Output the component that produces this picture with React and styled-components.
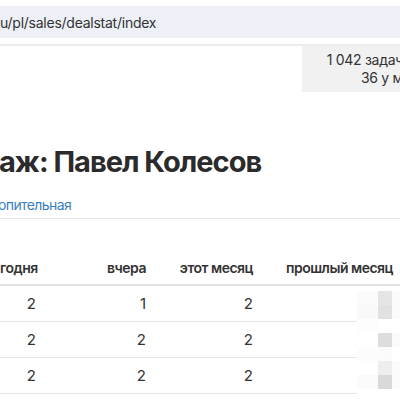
import React from "react";
import styled, { createGlobalStyle } from "styled-components";

const GlobalStyle = createGlobalStyle`
  html, body {
    margin: 0;
    padding: 0;
    background: #ffffff;
    overflow: hidden;
  }
  body {
    font-family: Inter, "Noto Sans", "Liberation Sans", sans-serif;
    color: #333333;
    width: 400px;
  }
`;

const Page = styled.div`
  width: 400px;
  padding-top: 6px;
`;

const UrlBar = styled.div`
  height: 32px;
  background: #eef0f7;
  display: flex;
  align-items: center;
  font-size: 14px;
  letter-spacing: -0.25px;
  color: #333;
  white-space: nowrap;
`;

const Divider = styled.div`
  margin-top: 6px;
  height: 2px;
  background: #ececec;
`;

const TopRow = styled.div`
  display: flex;
  justify-content: flex-end;
`;

const StatBox = styled.div`
  width: 101px;
  margin-right: -3px;
  height: 46px;
  box-sizing: border-box;
  padding-top: 5px;
  background: #f1f1f1;
  font-size: 14px;
  line-height: 18px;
  letter-spacing: -0.3px;
  text-align: right;
  white-space: nowrap;
  color: #333;
`;

const Title = styled.h1`
  margin: 52px 0 0 -1px;
  font-size: 29px;
  line-height: 36px;
  font-weight: 700;
  letter-spacing: -1px;
  color: #2b2b2b;
  white-space: nowrap;
`;

const TabLink = styled.a`
  display: block;
  margin: 15px 0 0 -2px;
  font-size: 14px;
  line-height: 20px;
  letter-spacing: -0.6px;
  color: #3b7fc3;
  text-decoration: none;
`;

const Rule = styled.div`
  margin-top: 3px;
  height: 1px;
  background: #e6e6e6;
`;

const Table = styled.div`
  position: relative;
  margin-top: 39px;
  width: 401px;
`;

const HeaderRow = styled.div`
  display: grid;
  grid-template-columns: 44px 110px 107px 140px;
  padding-bottom: 6px;
  border-bottom: 2px solid #e3e3e3;
`;

const HeadCell = styled.div`
  text-align: right;
  padding-right: 8px;
  font-size: 14px;
  line-height: 20px;
  font-weight: 600;
  letter-spacing: -0.5px;
  color: #333;
  white-space: nowrap;
`;

const Row = styled.div`
  display: grid;
  grid-template-columns: 44px 110px 107px 140px;
  height: 36px;
  box-sizing: border-box;
  border-bottom: 1px solid #e6e6e6;
  align-items: center;
`;

const Cell = styled.div`
  text-align: right;
  padding-right: 8px;
  font-size: 15px;
  color: #333;
`;

const Mosaic = styled.svg`
  position: absolute;
  right: 1px;
  top: 30px;
  display: block;
`;

const rows = [
  [2, 1, 2],
  [2, 2, 2],
  [2, 2, 2],
];

export default function App() {
  return (
    <>
      <GlobalStyle />
      <Page>
        <UrlBar>u/pl/sales/dealstat/index</UrlBar>
        <Divider />
        <TopRow>
          <StatBox>
            <div>1 042 задач</div>
            <div>36 у м</div>
          </StatBox>
        </TopRow>
        <Title>аж: Павел Колесов</Title>
        <TabLink href="#">опительная</TabLink>
        <Rule />
        <Table>
          <HeaderRow>
            <HeadCell>годня</HeadCell>
            <HeadCell>вчера</HeadCell>
            <HeadCell>этот месяц</HeadCell>
            <HeadCell>прошлый месяц</HeadCell>
          </HeaderRow>
          {rows.map((r, i) => (
            <Row key={i}>
              {r.map((v, j) => (
                <Cell key={j}>{v}</Cell>
              ))}
              <Cell />
            </Row>
          ))}
          <Mosaic width="43" height="115" viewBox="0 0 43 115">
            <rect x="0" y="0" width="43" height="115" fill="#ffffff" />
            <rect x="0" y="3" width="21" height="14" fill="#fbfbfb" />
            <rect x="0" y="17" width="21" height="14" fill="#f9f9f9" />
            <rect x="0" y="31" width="21" height="14" fill="#fdfdfd" />
            <rect x="0" y="59" width="21" height="14" fill="#fcfcfc" />
            <rect x="0" y="87" width="21" height="14" fill="#fbfbfb" />
            <rect x="35" y="3" width="8" height="28" fill="#fbfbfb" />
            <rect x="35" y="45" width="8" height="14" fill="#fafafa" />
            <rect x="35" y="73" width="8" height="28" fill="#fbfbfb" />
            <rect x="21" y="3" width="14" height="14" fill="#e5e5e5" />
            <rect x="21" y="17" width="14" height="14" fill="#e1e1e1" />
            <rect x="21" y="45" width="14" height="14" fill="#dddddd" />
            <rect x="21" y="59" width="14" height="14" fill="#fbfbfb" />
            <rect x="21" y="73" width="14" height="14" fill="#eeeeee" />
            <rect x="21" y="87" width="14" height="14" fill="#d9d9d9" />
          </Mosaic>
        </Table>
      </Page>
    </>
  );
}
